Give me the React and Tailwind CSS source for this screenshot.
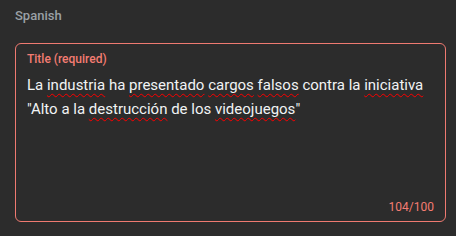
import React from "react";

const U = ({ children }) => (
  <span className="underline decoration-wavy decoration-[#ff0000] decoration-1 underline-offset-[3px]">
    {children}
  </span>
);

export default function App() {
  return (
    <div
      className="w-[456px] h-[236px] bg-[#2c2c2c] pl-[15px] pt-[7px]"
      style={{ fontFamily: "Roboto, 'Liberation Sans', sans-serif" }}
    >
      <div className="text-[13px] leading-[18px] font-medium text-[#9aa0a6]">Spanish</div>
      <div className="mt-[18px] w-[431px] h-[179px] rounded-[6px] border border-[#ef7a71] flex flex-col pl-[11px] pr-[11px] pt-[7px] pb-[6px]">
        <div className="text-[12px] leading-[16px] font-medium text-[#f47c72]">Title (required)</div>
        <div className="mt-[6px] text-[15px] leading-[24px] text-[#f1f3f4]">
          La <U>industria</U> ha <U>presentado</U> <U>cargos</U> <U>falsos</U> contra la <U>iniciativa</U>
          <br />
          "Alto a la <U>destrucción</U> de los <U>videojuegos</U>"
        </div>
        <div className="mt-auto text-right text-[12px] leading-[16px] text-[#f47c72]">104/100</div>
      </div>
    </div>
  );
}
